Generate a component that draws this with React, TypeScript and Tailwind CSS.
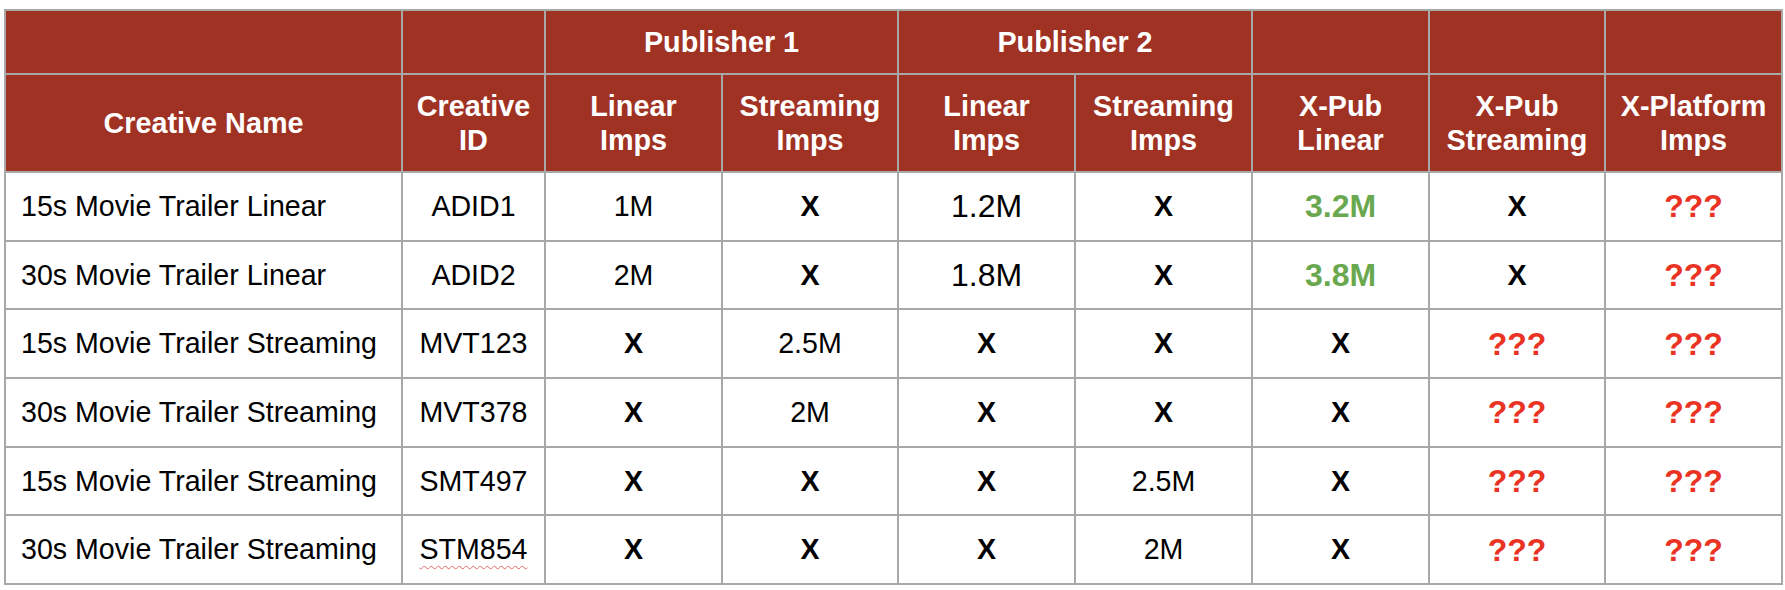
import type { ReactNode } from "react";

type Cell =
  | { kind: "text"; value: string }
  | { kind: "big"; value: string }
  | { kind: "x" }
  | { kind: "sum"; value: string }
  | { kind: "unknown" };

type Row = {
  name: string;
  id: string;
  cells: Cell[];
};

const X: Cell = { kind: "x" };
const Q: Cell = { kind: "unknown" };
const t = (value: string): Cell => ({ kind: "text", value });

const rows: Row[] = [
  {
    name: "15s Movie Trailer Linear",
    id: "ADID1",
    cells: [t("1M"), X, { kind: "big", value: "1.2M" }, X, { kind: "sum", value: "3.2M" }, X, Q],
  },
  {
    name: "30s Movie Trailer Linear",
    id: "ADID2",
    cells: [t("2M"), X, { kind: "big", value: "1.8M" }, X, { kind: "sum", value: "3.8M" }, X, Q],
  },
  { name: "15s Movie Trailer Streaming", id: "MVT123", cells: [X, t("2.5M"), X, X, X, Q, Q] },
  { name: "30s Movie Trailer Streaming", id: "MVT378", cells: [X, t("2M"), X, X, X, Q, Q] },
  { name: "15s Movie Trailer Streaming", id: "SMT497", cells: [X, X, X, t("2.5M"), X, Q, Q] },
  { name: "30s Movie Trailer Streaming", id: "STM854", cells: [X, X, X, t("2M"), X, Q, Q] },
];

const colWidths = [397, 143, 177, 176, 177, 177, 177, 176, 177];

function renderCell(cell: Cell): ReactNode {
  switch (cell.kind) {
    case "text":
      return <span className="text-[28.6px]">{cell.value}</span>;
    case "big":
      return <span className="text-[32px]">{cell.value}</span>;
    case "x":
      return <span className="text-[28.6px] font-bold">X</span>;
    case "sum":
      return <span className="text-[32px] font-bold text-[#6aa84f]">{cell.value}</span>;
    case "unknown":
      return <span className="text-[32px] font-bold text-[#ea3323]">???</span>;
  }
}

function HeadCell({ children, colSpan }: { children?: ReactNode; colSpan?: number }) {
  return (
    <th
      colSpan={colSpan}
      className="border-2 border-[#a8a8a8] bg-[#a03224] px-1 text-center align-middle text-[28.8px] font-bold leading-[34px] text-white"
    >
      {children}
    </th>
  );
}

export default function App() {
  return (
    <div
      className="min-h-[590px] bg-white pl-[4px] pt-[9px]"
      style={{ fontFamily: '"Liberation Sans", Arial, sans-serif' }}
    >
      <table className="w-[1777px] table-fixed border-collapse">
        <colgroup>
          {colWidths.map((w, i) => (
            <col key={i} style={{ width: w }} />
          ))}
        </colgroup>
        <thead>
          <tr className="h-[64px]">
            <HeadCell />
            <HeadCell />
            <HeadCell colSpan={2}>Publisher 1</HeadCell>
            <HeadCell colSpan={2}>Publisher 2</HeadCell>
            <HeadCell />
            <HeadCell />
            <HeadCell />
          </tr>
          <tr className="h-[98px]">
            <HeadCell>Creative Name</HeadCell>
            <HeadCell>
              Creative
              <br />
              ID
            </HeadCell>
            <HeadCell>
              Linear
              <br />
              Imps
            </HeadCell>
            <HeadCell>
              Streaming
              <br />
              Imps
            </HeadCell>
            <HeadCell>
              Linear
              <br />
              Imps
            </HeadCell>
            <HeadCell>
              Streaming
              <br />
              Imps
            </HeadCell>
            <HeadCell>
              X-Pub
              <br />
              Linear
            </HeadCell>
            <HeadCell>
              X-Pub
              <br />
              Streaming
            </HeadCell>
            <HeadCell>
              X-Platform
              <br />
              Imps
            </HeadCell>
          </tr>
        </thead>
        <tbody>
          {rows.map((row, i) => (
            <tr key={i} className="h-[68.7px] text-black">
              <td className="border-2 border-[#a8a8a8] pl-[15px] text-left align-middle text-[28.6px] leading-none">
                {row.name}
              </td>
              <td className="border-2 border-[#a8a8a8] text-center align-middle text-[28.6px] leading-none">
                <span
                  className={
                    row.id === "STM854"
                      ? "underline decoration-[#e06666] decoration-wavy decoration-1 underline-offset-[6px]"
                      : ""
                  }
                >
                  {row.id}
                </span>
              </td>
              {row.cells.map((cell, j) => (
                <td
                  key={j}
                  className="border-2 border-[#a8a8a8] text-center align-middle leading-none"
                >
                  {renderCell(cell)}
                </td>
              ))}
            </tr>
          ))}
        </tbody>
      </table>
    </div>
  );
}
